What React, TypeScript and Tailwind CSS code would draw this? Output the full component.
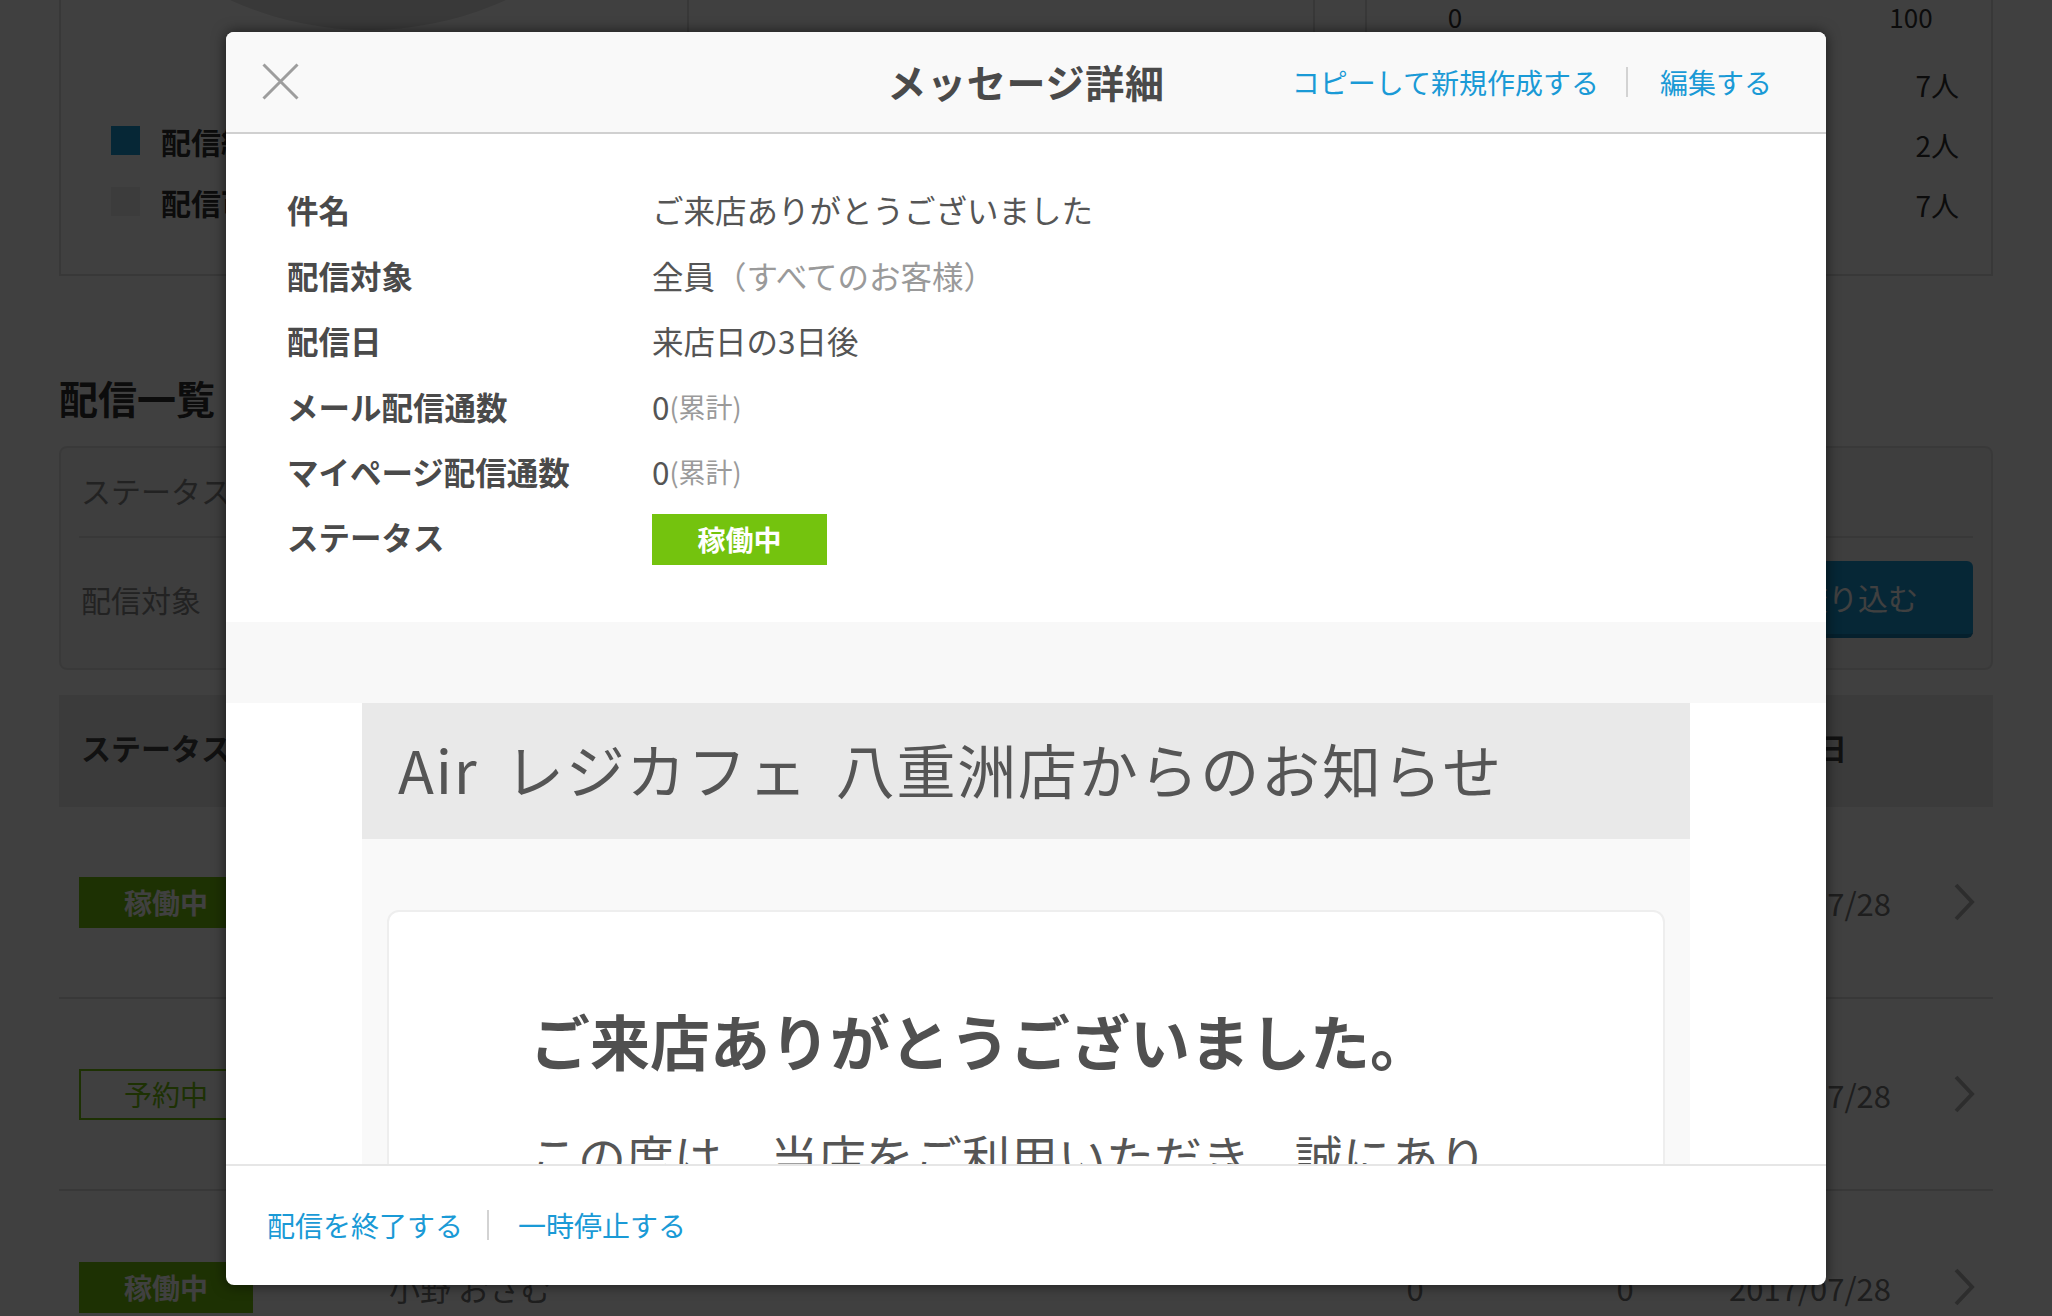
import React from "react";

const BLUE = "#1a9ad6";

function Chevron() {
  return (
    <svg width="22" height="38" viewBox="0 0 22 38" className="shrink-0">
      <path d="M3 2 L19 19 L3 36" fill="none" stroke="#b4b4b4" strokeWidth="4" />
    </svg>
  );
}

function BgRow({ kind, name, last }: { kind: "run" | "plan"; name: string; last?: boolean }) {
  return (
    <div className={`h-[192px] flex items-center pl-[20px] pr-[18px] ${last ? "" : "border-b-2 border-[#e0e0e0]"}`}>
      {kind === "run" ? (
        <div className="w-[174px] h-[51px] bg-[#74c30e] text-white font-bold text-[28px] flex items-center justify-center leading-none">
          稼働中
        </div>
      ) : (
        <div className="w-[174px] h-[51px] border-2 border-[#74c30e] text-[#74c30e] text-[28px] flex items-center justify-center leading-none">
          予約中
        </div>
      )}
      <div className="ml-[136px] text-[31px] text-[#777] leading-none">{name}</div>
      <div className="flex-1" />
      <div className="w-[100px] text-center text-[31px] text-[#777] leading-none">0</div>
      <div className="w-[100px] ml-[110px] text-center text-[31px] text-[#777] leading-none">0</div>
      <div className="w-[216px] text-right text-[31px] text-[#777] leading-none">2017/07/28</div>
      <div className="ml-[62px]">
        <Chevron />
      </div>
    </div>
  );
}

function Background() {
  return (
    <div className="px-[59px]">
      {/* chart box */}
      <div className="flex h-[276px] border-x-2 border-b-2 border-[#dedede]">
        <div className="w-[628px] shrink-0 border-r-2 border-[#dedede] flex flex-col">
          <svg width="626" height="100" className="shrink-0">
            <circle cx="307" cy="-302" r="332" fill="#e2e2e2" />
          </svg>
          <div className="mt-[26px] ml-[50px] flex flex-col gap-[32px]">
            <div className="flex items-center gap-[21px] h-[29px]">
              <div className="w-[29px] h-[29px] bg-[#1a9ad6]" />
              <span className="text-[30px] font-bold text-[#333] leading-none">配信終了</span>
            </div>
            <div className="flex items-center gap-[21px] h-[29px]">
              <div className="w-[29px] h-[29px] bg-[#f0f0f0]" />
              <span className="text-[30px] font-bold text-[#333] leading-none">配信可能</span>
            </div>
          </div>
        </div>
        <div className="w-[626px] shrink-0 border-r-2 border-[#dedede]" />
        <div className="w-[52px] shrink-0 border-r-2 border-[#dedede]" />
        <div className="flex-1 flex flex-col">
          <div className="h-[34px] flex items-center text-[26px] text-[#333] leading-none">
            <span className="ml-[68px] w-[40px] text-center">0</span>
            <span className="ml-[406px] w-[60px] text-center">100</span>
          </div>
          <div className="mt-[31px] pr-[32px] flex flex-col items-end gap-[20px] text-[28px] text-[#333] leading-[40px]">
            <span>7人</span>
            <span>2人</span>
            <span>7人</span>
          </div>
        </div>
      </div>

      <h2 className="mt-[96px] text-[39px] font-bold text-[#333] leading-[50px]">配信一覧</h2>

      {/* filter box */}
      <div className="mt-[24px] h-[224px] rounded-[8px] border-2 border-[#e3e3e3] bg-[#f6f6f6] px-[18px] flex flex-col">
        <div className="h-[90px] shrink-0 flex items-center pl-[2px] pb-[4px] border-b-2 border-[#e0e0e0] text-[30px] text-[#888] leading-none">
          ステータス
        </div>
        <div className="flex-1 flex items-center justify-between pl-[2px] pb-[8px]">
          <span className="text-[30px] text-[#888] leading-none">配信対象</span>
          <div className="w-[230px] h-[77px] rounded-[6px] bg-[#1a9ad6] border-b-4 border-[#1480b4] text-white text-[30px] flex items-center justify-center leading-none">
            絞り込む
          </div>
        </div>
      </div>

      {/* table */}
      <div className="mt-[25px] h-[112px] bg-[#ececec] flex items-center px-[22px] pb-[8px] text-[30px] font-bold text-[#444] leading-none">
        <span>ステータス</span>
        <span className="ml-auto mr-[124px]">配信開始日</span>
      </div>
      <BgRow kind="run" name="山田 花子" />
      <BgRow kind="plan" name="鈴木 一郎" />
      <BgRow kind="run" name="小野 おさむ" last />
    </div>
  );
}

function InfoRow({ label, children }: { label: string; children: React.ReactNode }) {
  return (
    <div className="h-[65.4px] flex items-center">
      <div className="w-[365px] shrink-0 text-[31.5px] font-bold text-[#4a4a4a] leading-none">{label}</div>
      <div className="text-[31.5px] text-[#555] leading-none flex items-center">{children}</div>
    </div>
  );
}

function Modal() {
  return (
    <div className="w-[1600px] h-[1253px] bg-white rounded-[8px] shadow-[0_0_14px_rgba(0,0,0,0.6)] flex flex-col overflow-hidden">
      {/* header */}
      <div className="h-[102px] shrink-0 bg-[#f9f9f9] border-b-2 border-[#d0d0d0] grid grid-cols-[1fr_auto_1fr] items-center">
        <div className="pl-[36px] flex items-center">
          <svg width="37" height="37" viewBox="0 0 37 37">
            <path d="M1.5 1.5 L35.5 35.5 M35.5 1.5 L1.5 35.5" stroke="#9d9d9d" strokeWidth="3" fill="none" />
          </svg>
        </div>
        <h1 className="text-[39px] font-bold text-[#4a4a4a] leading-none tracking-[0.02em]">メッセージ詳細</h1>
        <div className="flex items-center justify-end pr-[54px] text-[28px] leading-none" style={{ color: BLUE }}>
          <span>コピーして新規作成する</span>
          <span className="w-[2px] h-[30px] bg-[#d3d3d3] ml-[27px] mr-[32px]" />
          <span>編集する</span>
        </div>
      </div>

      {/* body */}
      <div className="flex-1 min-h-0 overflow-hidden flex flex-col">
        <div className="shrink-0 pt-[44px] pb-[52px] px-[61px]">
          <InfoRow label="件名">ご来店ありがとうございました</InfoRow>
          <InfoRow label="配信対象">
            全員<span className="text-[#9a9a9a]">（すべてのお客様）</span>
          </InfoRow>
          <InfoRow label="配信日">来店日の3日後</InfoRow>
          <InfoRow label="メール配信通数">
            0<span className="text-[27px] text-[#9a9a9a]">(累計)</span>
          </InfoRow>
          <InfoRow label="マイページ配信通数">
            0<span className="text-[27px] text-[#9a9a9a]">(累計)</span>
          </InfoRow>
          <InfoRow label="ステータス">
            <div className="w-[175px] h-[51px] mt-[4px] bg-[#74c30e] text-white font-bold text-[28px] flex items-center justify-center leading-none">
              稼働中
            </div>
          </InfoRow>
        </div>
        <div className="h-[81px] shrink-0 bg-[#f8f8f8]" />
        <div className="flex-1 min-h-0 flex justify-center">
          <div className="w-[1328px] flex flex-col">
            <div className="h-[136px] shrink-0 bg-[#e9e9e9] flex items-center pl-[36px] pb-[4px] text-[59px] text-[#555] leading-none tracking-[0.03em] [word-spacing:0.2em]">
              Air レジカフェ 八重洲店からのお知らせ
            </div>
            <div className="flex-1 bg-[#f9f9f9] px-[25px] pt-[71px]">
              <div className="bg-white border-2 border-[#eeeeee] rounded-[12px] px-[141px] pt-[86px] h-[700px]">
                <h2 className="text-[60px] font-bold leading-[83px] text-[#505050]">ご来店ありがとうございました。</h2>
                <p className="mt-[37px] text-[48px] leading-[75px] text-[#555]">
                  この度は、当店をご利用いただき、誠にありがとうございました。
                </p>
              </div>
            </div>
          </div>
        </div>
      </div>

      {/* footer */}
      <div className="h-[121px] shrink-0 border-t-2 border-[#e6e6e6] flex items-center pl-[41px] text-[28px] leading-none" style={{ color: BLUE }}>
        <span>配信を終了する</span>
        <span className="w-[2px] h-[30px] bg-[#d3d3d3] ml-[24px] mr-[29px]" />
        <span>一時停止する</span>
      </div>
    </div>
  );
}

export default function App() {
  return (
    <div className="relative w-[2052px] h-[1316px] overflow-hidden bg-white font-['Noto_Sans_CJK_JP','Noto_Sans',sans-serif]">
      <Background />
      <div className="absolute inset-0 bg-black/75 flex items-center justify-center">
        <Modal />
      </div>
    </div>
  );
}
